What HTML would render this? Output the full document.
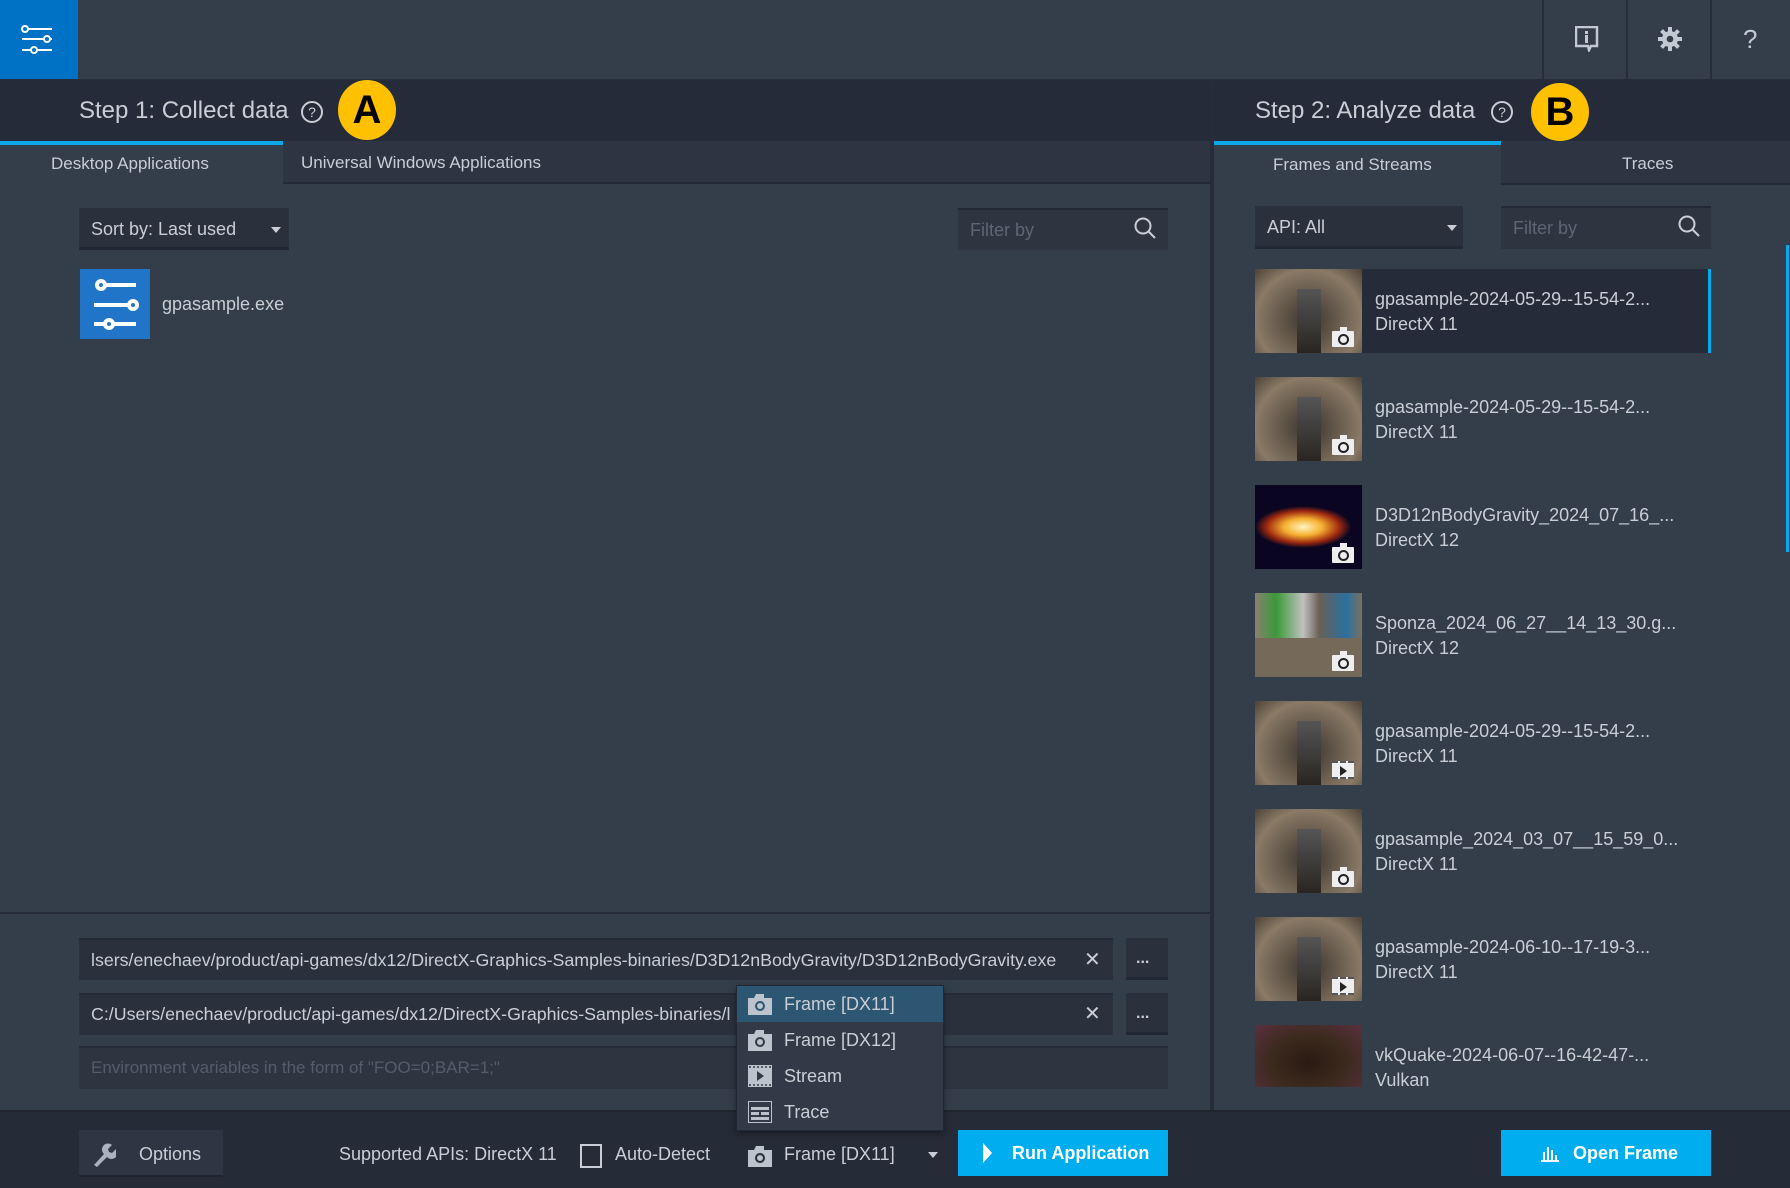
<!DOCTYPE html>
<html><head><meta charset="utf-8"><style>
*{margin:0;padding:0;box-sizing:border-box}
body{width:1790px;height:1188px;background:#343d4a;font-family:"Liberation Sans",sans-serif;color:#c9ced6;position:relative;overflow:hidden}
.a{position:absolute}
.t{white-space:nowrap}
.thumb{position:absolute;left:1255px;width:107px;height:84px;background:radial-gradient(ellipse at 50% 60%,#3a332c 0%,#6e6152 45%,#8a7a66 70%,#4c4237 100%)}
.thumb .st{position:absolute;left:42px;top:20px;width:24px;height:64px;background:linear-gradient(#555,#2a2520)}
.badge{position:absolute;right:8px;bottom:6px;width:22px;height:16px;background:#eee;border-radius:1px}
.badge:after{content:"";position:absolute;left:6px;top:3px;width:7px;height:7px;border:2px solid #222;border-radius:50%}
.badge:before{content:"";position:absolute;left:8px;top:-4px;width:7px;height:4px;background:#eee}
.vb{position:absolute;right:8px;bottom:6px;width:22px;height:18px;background:#eee;border-top:2px dashed #555;border-bottom:2px dashed #555}
.vb:after{content:"";position:absolute;left:8px;top:3px;border-left:7px solid #222;border-top:5px solid transparent;border-bottom:5px solid transparent}
.l1{position:absolute;left:1375px;font-size:18px;color:#c9ced6}
.l2{position:absolute;left:1375px;font-size:18px;color:#c9ced6}
</style></head><body>
<div class="a" style="left:0;top:0;width:78px;height:80px;background:#0072c6"></div>
<svg class="a" style="left:20px;top:24px" width="36" height="32" viewBox="0 0 36 32" fill="none" stroke="#fff" stroke-width="2"><circle cx="5" cy="5" r="3"/><line x1="8" y1="5" x2="32" y2="5"/><line x1="2" y1="15" x2="24" y2="15"/><circle cx="27" cy="15" r="3"/><line x1="30" y1="15" x2="32" y2="15"/><line x1="2" y1="26" x2="11" y2="26"/><circle cx="14" cy="26" r="3"/><line x1="17" y1="26" x2="32" y2="26"/></svg>
<div class="a" style="left:78px;top:0;width:1712px;height:80px;background:#343d4a"></div>
<div class="a" style="left:1542px;top:0;width:2px;height:80px;background:#262c38"></div>
<div class="a" style="left:1626px;top:0;width:2px;height:80px;background:#262c38"></div>
<div class="a" style="left:1710px;top:0;width:2px;height:80px;background:#262c38"></div>
<svg class="a" style="left:1575px;top:26px" width="24" height="26" viewBox="0 0 24 26"><path d="M1 1h21v19h-6l-2 4-1-4H1z" fill="none" stroke="#c2c9d3" stroke-width="2.5"/><rect x="10" y="5" width="3" height="3" fill="#c2c9d3"/><rect x="10" y="9" width="3" height="8" fill="#c2c9d3"/></svg>
<svg class="a" style="left:1657px;top:26px" width="26" height="26" viewBox="0 0 26 26"><g fill="#c2c9d3"><circle cx="13" cy="13" r="8"/><rect x="11" y="1" width="4" height="24"/><rect x="1" y="11" width="24" height="4"/><rect x="11" y="1" width="4" height="24" transform="rotate(45 13 13)"/><rect x="11" y="1" width="4" height="24" transform="rotate(-45 13 13)"/></g><circle cx="13" cy="13" r="3.3" fill="#343d4a"/></svg>
<div class="a t" style="left:1743px;top:24px;font-size:26px;color:#c2c9d3">?</div>
<div class="a" style="left:0;top:79px;width:1790px;height:2px;background:#262c38"></div>
<div class="a" style="left:0;top:81px;width:1790px;height:60px;background:#252b38"></div>
<div class="a t" style="left:79px;top:97px;font-size:24px;color:#c9ced6">Step 1: Collect data</div>
<svg class="a" style="left:300px;top:100px" width="24" height="24" viewBox="0 0 24 24"><circle cx="12" cy="12" r="10" fill="none" stroke="#c9ced6" stroke-width="2"/><text x="12" y="17" text-anchor="middle" font-size="14" fill="#c9ced6" font-family="Liberation Sans">?</text></svg>
<div class="a" style="left:338px;top:80px;width:58px;height:60px;border-radius:50%;background:#ffc000;color:#000;font-weight:bold;font-size:40px;text-align:center;line-height:60px">A</div>
<div class="a t" style="left:1255px;top:97px;font-size:24px;color:#c9ced6">Step 2: Analyze data</div>
<svg class="a" style="left:1490px;top:100px" width="24" height="24" viewBox="0 0 24 24"><circle cx="12" cy="12" r="10" fill="none" stroke="#c9ced6" stroke-width="2"/><text x="12" y="17" text-anchor="middle" font-size="14" fill="#c9ced6" font-family="Liberation Sans">?</text></svg>
<div class="a" style="left:1531px;top:83px;width:58px;height:58px;border-radius:50%;background:#ffc000;color:#000;font-weight:bold;font-size:40px;text-align:center;line-height:58px">B</div>
<div class="a" style="left:1210px;top:81px;width:4px;height:1107px;background:#262c38"></div>
<div class="a" style="left:0;top:141px;width:283px;height:43px;background:#343d4a;border-top:4px solid #0aa8e6"></div>
<div class="a t" style="left:51px;top:154px;font-size:17px;color:#c9ced6">Desktop Applications</div>
<div class="a" style="left:283px;top:141px;width:927px;height:43px;background:#2e3542;border-bottom:2px solid #242a35"></div>
<div class="a t" style="left:301px;top:153px;font-size:17px;color:#c9ced6">Universal Windows Applications</div>
<div class="a" style="left:79px;top:208px;width:210px;height:42px;background:#2a313d;border-bottom:3px solid #222833"></div>
<div class="a t" style="left:91px;top:219px;font-size:18px">Sort by: Last used</div>
<div class="a" style="left:271px;top:227px;border-top:6px solid #c9ced6;border-left:5px solid transparent;border-right:5px solid transparent"></div>
<div class="a" style="left:958px;top:208px;width:210px;height:42px;background:#2e3541;border-top:2px solid #232934"></div>
<div class="a t" style="left:970px;top:220px;font-size:18px;color:#5c6675">Filter by</div>
<svg class="a" style="left:1133px;top:216px" width="24" height="24" viewBox="0 0 24 24" fill="none" stroke="#c9ced6" stroke-width="2"><circle cx="10" cy="10" r="7.5"/><line x1="15.5" y1="15.5" x2="22" y2="22"/></svg>
<div class="a" style="left:80px;top:269px;width:70px;height:70px;background:#2175c8"></div>
<svg class="a" style="left:80px;top:269px" width="70" height="70" viewBox="0 0 70 70" fill="none" stroke="#fff" stroke-width="4"><circle cx="21" cy="16" r="4"/><line x1="25" y1="16" x2="56" y2="16"/><line x1="14" y1="36" x2="49" y2="36"/><circle cx="53" cy="36" r="4"/><line x1="14" y1="55" x2="25" y2="55"/><circle cx="29" cy="55" r="4"/><line x1="33" y1="55" x2="56" y2="55"/></svg>
<div class="a t" style="left:162px;top:294px;font-size:18px">gpasample.exe</div>
<div class="a" style="left:0;top:912px;width:1210px;height:2px;background:#262c38"></div>
<div class="a" style="left:79px;top:938px;width:1034px;height:42px;background:#2a313d;border-top:2px solid #242a35"></div>
<div class="a t" style="left:91px;top:950px;font-size:17.8px;width:980px;overflow:hidden">lsers/enechaev/product/api-games/dx12/DirectX-Graphics-Samples-binaries/D3D12nBodyGravity/D3D12nBodyGravity.exe</div>
<div class="a t" style="left:1084px;top:947px;font-size:20px">✕</div>
<div class="a" style="left:1126px;top:938px;width:42px;height:42px;background:#2a313d;border-bottom:3px solid #222833"></div>
<div class="a t" style="left:1136px;top:950px;font-size:16px;font-weight:bold">...</div>
<div class="a" style="left:79px;top:993px;width:1034px;height:42px;background:#2a313d;border-top:2px solid #242a35"></div>
<div class="a t" style="left:91px;top:1004px;font-size:17.8px">C:/Users/enechaev/product/api-games/dx12/DirectX-Graphics-Samples-binaries/l</div>
<div class="a t" style="left:1084px;top:1001px;font-size:20px">✕</div>
<div class="a" style="left:1126px;top:993px;width:42px;height:42px;background:#2a313d;border-bottom:3px solid #222833"></div>
<div class="a t" style="left:1136px;top:1005px;font-size:16px;font-weight:bold">...</div>
<div class="a" style="left:79px;top:1046px;width:1089px;height:43px;background:#2e3541;border-top:2px solid #262c37"></div>
<div class="a t" style="left:91px;top:1058px;font-size:17px;color:#535d6c">Environment variables in the form of "FOO=0;BAR=1;"</div>
<div class="a" style="left:0;top:1110px;width:1790px;height:78px;background:#252b37;border-top:2px solid #20252f"></div>
<div class="a" style="left:79px;top:1130px;width:144px;height:47px;background:#2f3643;border-bottom:2px solid #1f242e"></div>
<svg class="a" style="left:92px;top:1141px" width="24" height="26" viewBox="0 0 24 26"><path d="M2 24l10-11a6 6 0 0 1 8-9l-4 4 1 3 3 1 4-4a6 6 0 0 1-9 8L5 26z" fill="#aab2bd"/></svg>
<div class="a t" style="left:139px;top:1144px;font-size:18px;color:#c9ced6">Options</div>
<div class="a t" style="left:339px;top:1144px;font-size:18px">Supported APIs: DirectX 11</div>
<div class="a" style="left:580px;top:1144px;width:22px;height:24px;border:2px solid #c9ced6"></div>
<div class="a t" style="left:615px;top:1144px;font-size:18px">Auto-Detect</div>
<svg class="a" style="left:748px;top:1145px" width="24" height="22" viewBox="0 0 24 22"><path d="M0 5h6l2-4h8v4h8v17H0z" fill="#bcc3cc"/><circle cx="12" cy="13" r="4" fill="none" stroke="#252b37" stroke-width="2"/></svg>
<div class="a t" style="left:784px;top:1144px;font-size:18px">Frame [DX11]</div>
<div class="a" style="left:928px;top:1152px;border-top:6px solid #c9ced6;border-left:5px solid transparent;border-right:5px solid transparent"></div>
<div class="a" style="left:958px;top:1130px;width:210px;height:46px;background:#00aeef"></div>
<div class="a" style="left:983px;top:1143px;border-left:9px solid #fff;border-top:10px solid transparent;border-bottom:10px solid transparent"></div>
<div class="a t" style="left:1012px;top:1143px;font-size:18px;font-weight:bold;color:#fff">Run Application</div>
<div class="a" style="left:1501px;top:1130px;width:210px;height:46px;background:#00aeef"></div>
<svg class="a" style="left:1541px;top:1144px" width="18" height="18" viewBox="0 0 18 18" fill="#fff"><rect x="2" y="8" width="2" height="10"/><rect x="6" y="3" width="2" height="15"/><rect x="10" y="6" width="2" height="12"/><rect x="14" y="11" width="2" height="7"/><rect x="0" y="16" width="18" height="2"/></svg>
<div class="a t" style="left:1573px;top:1143px;font-size:18px;font-weight:bold;color:#fff">Open Frame</div>
<div class="a" style="left:736px;top:985px;width:208px;height:146px;background:#323a47;border:1px solid #232934;box-shadow:0 2px 6px rgba(0,0,0,.4)"></div>
<div class="a" style="left:737px;top:986px;width:206px;height:36px;background:#2d5672"></div>
<svg class="a" style="left:748px;top:993px" width="24" height="22" viewBox="0 0 24 22"><path d="M0 5h6l2-4h8v4h8v17H0z" fill="#bcc3cc"/><circle cx="12" cy="13" r="4" fill="none" stroke="#2d5672" stroke-width="2"/></svg>
<div class="a t" style="left:784px;top:994px;font-size:18px">Frame [DX11]</div>
<svg class="a" style="left:748px;top:1029px" width="24" height="22" viewBox="0 0 24 22"><path d="M0 5h6l2-4h8v4h8v17H0z" fill="#bcc3cc"/><circle cx="12" cy="13" r="4" fill="none" stroke="#323a47" stroke-width="2"/></svg>
<div class="a t" style="left:784px;top:1030px;font-size:18px">Frame [DX12]</div>
<svg class="a" style="left:748px;top:1065px" width="24" height="22" viewBox="0 0 24 22"><rect x="0" y="0" width="24" height="22" fill="#bcc3cc"/><path d="M1 2h22M1 20h22" stroke="#323a47" stroke-width="1.5" stroke-dasharray="2 2"/><path d="M9 6l7 5-7 5z" fill="#323a47"/></svg>
<div class="a t" style="left:784px;top:1066px;font-size:18px">Stream</div>
<svg class="a" style="left:748px;top:1101px" width="24" height="22" viewBox="0 0 24 22"><rect x="0.5" y="0.5" width="23" height="21" fill="none" stroke="#bcc3cc"/><rect x="3" y="6" width="18" height="3" fill="#bcc3cc"/><rect x="3" y="11" width="8" height="3" fill="#bcc3cc"/><rect x="13" y="11" width="8" height="3" fill="#bcc3cc"/><rect x="3" y="16" width="18" height="3" fill="#bcc3cc"/></svg>
<div class="a t" style="left:784px;top:1102px;font-size:18px">Trace</div>
<div class="a" style="left:1214px;top:141px;width:287px;height:44px;background:#343d4a;border-top:4px solid #0aa8e6"></div>
<div class="a t" style="left:1273px;top:155px;font-size:17px;color:#c9ced6">Frames and Streams</div>
<div class="a" style="left:1501px;top:141px;width:289px;height:44px;background:#2e3542;border-bottom:2px solid #242a35"></div>
<div class="a t" style="left:1622px;top:154px;font-size:17px">Traces</div>
<div class="a" style="left:1255px;top:206px;width:208px;height:43px;background:#2a313d;border-bottom:3px solid #222833"></div>
<div class="a t" style="left:1267px;top:217px;font-size:18px">API: All</div>
<div class="a" style="left:1447px;top:225px;border-top:6px solid #c9ced6;border-left:5px solid transparent;border-right:5px solid transparent"></div>
<div class="a" style="left:1501px;top:206px;width:210px;height:43px;background:#2e3541;border-top:2px solid #232934"></div>
<div class="a t" style="left:1513px;top:218px;font-size:18px;color:#5c6675">Filter by</div>
<svg class="a" style="left:1677px;top:214px" width="24" height="24" viewBox="0 0 24 24" fill="none" stroke="#c9ced6" stroke-width="2"><circle cx="10" cy="10" r="7.5"/><line x1="15.5" y1="15.5" x2="22" y2="22"/></svg>
<div class="a" style="left:1786px;top:245px;width:3px;height:307px;background:#00aeef"></div>
<div class="a" style="left:1255px;top:269px;width:456px;height:84px;background:#252b38;border-right:3px solid #00aeef"></div>
<div class="thumb" style="top:269px"><div class="st"></div><div class="badge"></div></div>
<div class="l1 t" style="top:289px">gpasample-2024-05-29--15-54-2...</div><div class="l2 t" style="top:314px">DirectX 11</div>
<div class="thumb" style="top:377px"><div class="st"></div><div class="badge"></div></div>
<div class="l1 t" style="top:397px">gpasample-2024-05-29--15-54-2...</div><div class="l2 t" style="top:422px">DirectX 11</div>
<div class="thumb" style="top:485px;background:radial-gradient(ellipse 45% 25% at 45% 50%,#fff6c0 0%,#f5b030 40%,#a02a10 75%,#0a0520 100%)"><div class="badge"></div></div>
<div class="l1 t" style="top:505px">D3D12nBodyGravity_2024_07_16_...</div><div class="l2 t" style="top:530px">DirectX 12</div>
<div class="thumb" style="top:593px;background:linear-gradient(90deg,#8a8070 0%,#3a9a3a 20%,#c0c0c0 45%,#6a6055 60%,#2a70a0 85%,#7a7060 100%)"><div class="a" style="left:0;top:45px;width:107px;height:39px;background:#756a5a"></div><div class="badge"></div></div>
<div class="l1 t" style="top:613px">Sponza_2024_06_27__14_13_30.g...</div><div class="l2 t" style="top:638px">DirectX 12</div>
<div class="thumb" style="top:701px"><div class="st"></div><div class="vb"></div></div>
<div class="l1 t" style="top:721px">gpasample-2024-05-29--15-54-2...</div><div class="l2 t" style="top:746px">DirectX 11</div>
<div class="thumb" style="top:809px"><div class="st"></div><div class="badge"></div></div>
<div class="l1 t" style="top:829px">gpasample_2024_03_07__15_59_0...</div><div class="l2 t" style="top:854px">DirectX 11</div>
<div class="thumb" style="top:917px"><div class="st"></div><div class="vb"></div></div>
<div class="l1 t" style="top:937px">gpasample-2024-06-10--17-19-3...</div><div class="l2 t" style="top:962px">DirectX 11</div>
<div class="thumb" style="top:1025px;height:62px;background:radial-gradient(ellipse at 50% 60%,#2a1a12 0%,#3c2a1e 50%,#5a3040 100%)"></div>
<div class="l1 t" style="top:1045px">vkQuake-2024-06-07--16-42-47-...</div><div class="l2 t" style="top:1070px">Vulkan</div>
<div class="a" style="left:1214px;top:1110px;width:576px;height:2px;background:#20252f"></div>
</body></html>
